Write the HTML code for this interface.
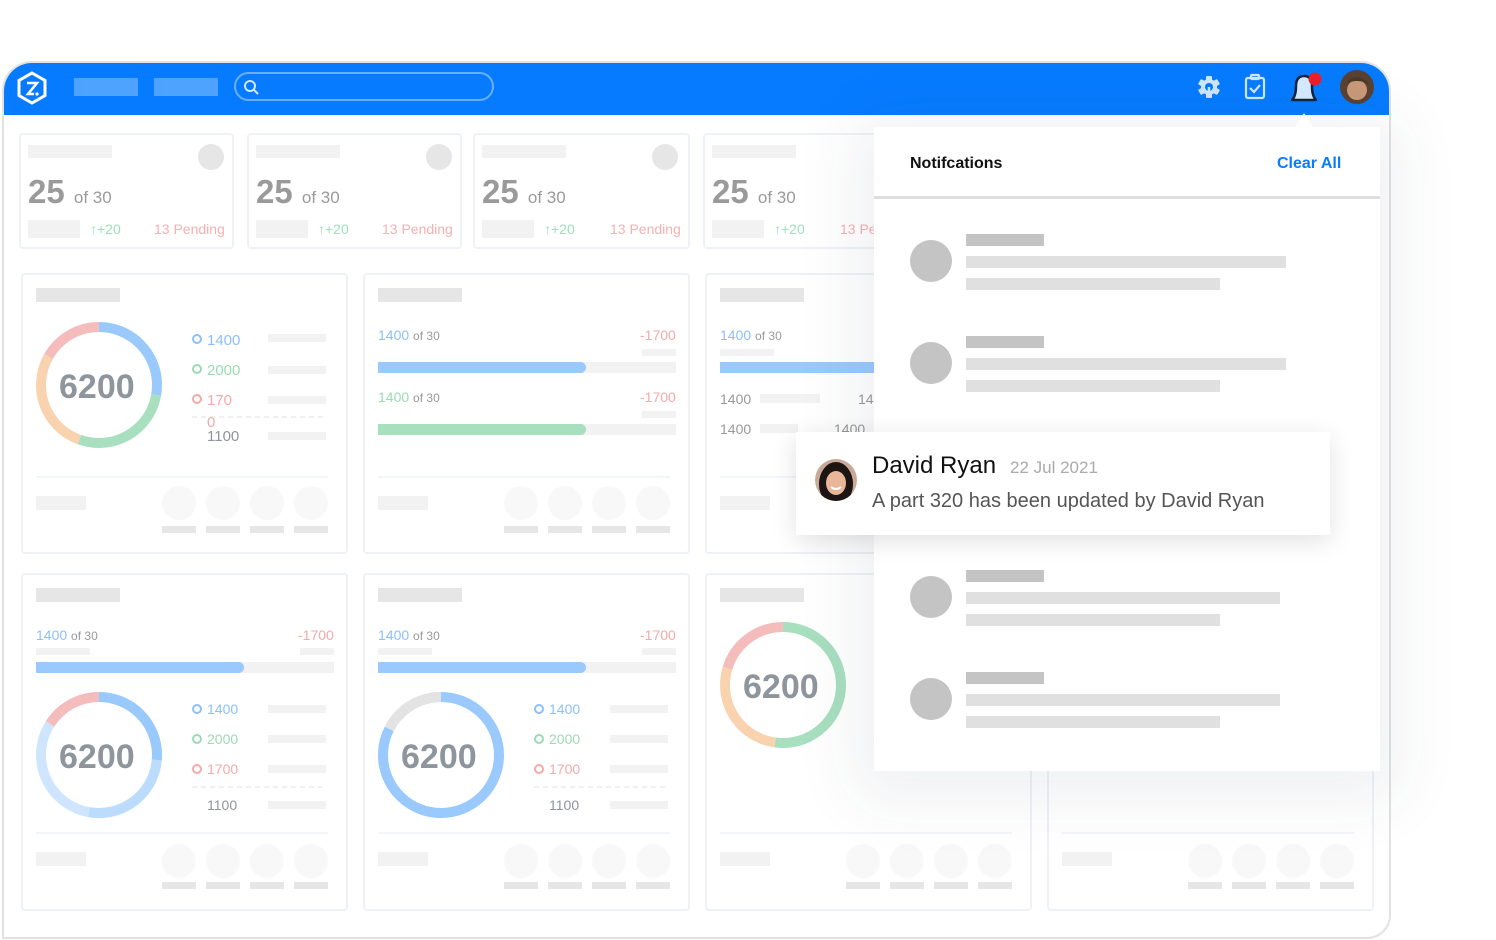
<!DOCTYPE html>
<html><head><meta charset="utf-8"><style>
*{margin:0;padding:0;box-sizing:border-box}
body{width:1496px;height:940px;background:#fff;position:relative;overflow:hidden;font-family:"Liberation Sans",sans-serif}
.a{position:absolute}
.ph{position:absolute;background:#f2f2f2}
.ph2{position:absolute;background:#e6e6e6}
.card{position:absolute;border:2px solid #eef2f7;border-radius:4px;background:#fff}
.t{position:absolute;white-space:nowrap;line-height:1}
</style></head><body>
<div class="a" style="left:2px;top:61px;width:1389px;height:878px;border:2px solid #e2e2e2;border-radius:30px 30px 24px 0;overflow:hidden;background:#fff">
<div class="a" style="left:0;top:0;width:1389px;height:52px;background:#077bff"></div>
</div>
<!-- header -->
<div class="a" style="left:74px;top:78px;width:64px;height:18px;background:#4da3ff"></div>
<div class="a" style="left:154px;top:78px;width:64px;height:18px;background:#4da3ff"></div>
<div class="a" style="left:234px;top:72px;width:260px;height:29px;border:2px solid rgba(255,255,255,.4);border-radius:15px"></div>
<svg class="a" style="left:0;top:0" width="1496" height="940">
<g fill="none" stroke="#fff" stroke-width="3"><path d="M32 73 L45 80.5 L45 95.5 L32 103 L19 95.5 L19 80.5 Z"/></g>
<path d="M27 83 H37 L28 94 H34" fill="none" stroke="#fff" stroke-width="2.5"/><circle cx="37" cy="94" r="1.6" fill="#fff"/>
<circle cx="250" cy="86" r="5" fill="none" stroke="#cfe6ff" stroke-width="2"/><path d="M254 90 L258 94" stroke="#cfe6ff" stroke-width="2"/>
<g fill="#cfe6ff"><circle cx="1209" cy="87" r="8"/>
<rect x="1206" y="76" width="6" height="22" rx="1"/><rect x="1206" y="76" width="6" height="22" rx="1" transform="rotate(60 1209 87)"/><rect x="1206" y="76" width="6" height="22" rx="1" transform="rotate(-60 1209 87)"/></g>
<circle cx="1209" cy="87" r="4" fill="#077bff"/><path d="M1209 87v8" stroke="#cfe6ff" stroke-width="2.5"/>
<g fill="none" stroke="#cfe6ff" stroke-width="2.2"><rect x="1246" y="78" width="18" height="20" rx="2"/><rect x="1251" y="75" width="8" height="4" rx="1"/><path d="M1250 88l4 4 6-7"/></g>
<path d="M1292 100 Q1296 96 1296 86 Q1296 76 1304 76 Q1312 76 1312 86 Q1312 96 1316 100 Z" fill="#d6eaff" stroke="#0a2540" stroke-width="2.5" stroke-linejoin="round"/>
<circle cx="1315" cy="79" r="6.5" fill="#e8202a"/>
<circle cx="1357" cy="87" r="17" fill="#5a4232"/><circle cx="1357" cy="90" r="10" fill="#c99a78"/><path d="M1344 85 Q1357 69 1370 85 Q1357 77 1344 85Z" fill="#4a3a2c"/>
</svg>

<!-- stat cards -->
<div class="card" style="left:19px;top:133px;width:215px;height:116px"></div>
<div class="card" style="left:247px;top:133px;width:215px;height:116px"></div>
<div class="card" style="left:473px;top:133px;width:217px;height:116px"></div>
<div class="card" style="left:703px;top:133px;width:217px;height:116px"></div>
<div class="ph" style="left:28px;top:145px;width:84px;height:13px"></div><div class="a" style="left:198px;top:144px;width:26px;height:26px;border-radius:50%;background:#e6e6e6"></div>
<div class="ph" style="left:256px;top:145px;width:84px;height:13px"></div><div class="a" style="left:426px;top:144px;width:26px;height:26px;border-radius:50%;background:#e6e6e6"></div>
<div class="ph" style="left:482px;top:145px;width:84px;height:13px"></div><div class="a" style="left:652px;top:144px;width:26px;height:26px;border-radius:50%;background:#e6e6e6"></div>
<div class="ph" style="left:712px;top:145px;width:84px;height:13px"></div>
<div class="t" style="left:28px;top:175px;font-size:33px;font-weight:bold;color:#9a9a9a">25 <span style="font-size:17px;font-weight:normal">of 30</span></div>
<div class="t" style="left:256px;top:175px;font-size:33px;font-weight:bold;color:#9a9a9a">25 <span style="font-size:17px;font-weight:normal">of 30</span></div>
<div class="t" style="left:482px;top:175px;font-size:33px;font-weight:bold;color:#9a9a9a">25 <span style="font-size:17px;font-weight:normal">of 30</span></div>
<div class="t" style="left:712px;top:175px;font-size:33px;font-weight:bold;color:#9a9a9a">25 <span style="font-size:17px;font-weight:normal">of 30</span></div>
<div class="ph" style="left:28px;top:220px;width:52px;height:18px"></div><div class="t" style="left:90px;top:222px;font-size:14px;color:#9ee0b9"><b>↑</b>+20</div><div class="t" style="left:154px;top:222px;font-size:14px;color:#f6b0b0">13 Pending</div>
<div class="ph" style="left:256px;top:220px;width:52px;height:18px"></div><div class="t" style="left:318px;top:222px;font-size:14px;color:#9ee0b9"><b>↑</b>+20</div><div class="t" style="left:382px;top:222px;font-size:14px;color:#f6b0b0">13 Pending</div>
<div class="ph" style="left:482px;top:220px;width:52px;height:18px"></div><div class="t" style="left:544px;top:222px;font-size:14px;color:#9ee0b9"><b>↑</b>+20</div><div class="t" style="left:610px;top:222px;font-size:14px;color:#f6b0b0">13 Pending</div>
<div class="ph" style="left:712px;top:220px;width:52px;height:18px"></div><div class="t" style="left:774px;top:222px;font-size:14px;color:#9ee0b9"><b>↑</b>+20</div><div class="t" style="left:840px;top:222px;font-size:14px;color:#f6b0b0">13 Pending</div>

<!-- big cards -->
<div class="card" style="left:21px;top:273px;width:327px;height:281px"></div>
<div class="card" style="left:363px;top:273px;width:327px;height:281px"></div>
<div class="card" style="left:705px;top:273px;width:327px;height:281px"></div>
<div class="card" style="left:21px;top:573px;width:327px;height:338px"></div>
<div class="card" style="left:363px;top:573px;width:327px;height:338px"></div>
<div class="card" style="left:705px;top:573px;width:327px;height:338px"></div>
<div class="card" style="left:1047px;top:573px;width:327px;height:338px"></div>
<div class="ph2" style="left:36px;top:288px;width:84px;height:14px"></div>
<div class="ph2" style="left:378px;top:288px;width:84px;height:14px"></div>
<div class="ph2" style="left:720px;top:288px;width:84px;height:14px"></div>
<div class="ph2" style="left:36px;top:588px;width:84px;height:14px"></div>
<div class="ph2" style="left:378px;top:588px;width:84px;height:14px"></div>
<div class="ph2" style="left:720px;top:588px;width:84px;height:14px"></div>

<!-- donut svg -->
<svg class="a" style="left:0;top:0" width="1496" height="940">
<g fill="none" stroke-width="10">
<g transform="rotate(-90 99 385)"><circle cx="99" cy="385" r="58" stroke="#99c9fd" stroke-dasharray="101 364"/><circle cx="99" cy="385" r="58" stroke="#a8dfbf" stroke-dasharray="101 364" stroke-dashoffset="-101"/><circle cx="99" cy="385" r="58" stroke="#f9d3b0" stroke-dasharray="101 364" stroke-dashoffset="-202"/><circle cx="99" cy="385" r="58" stroke="#f5bcbc" stroke-dasharray="61 364" stroke-dashoffset="-303"/></g>
<g transform="rotate(-90 99 755)"><circle cx="99" cy="755" r="58" stroke="#cfe5fd"/><circle cx="99" cy="755" r="58" stroke="#99c9fd" stroke-dasharray="96 364"/><circle cx="99" cy="755" r="58" stroke="#bcdcfd" stroke-dasharray="96 364" stroke-dashoffset="-96"/><circle cx="99" cy="755" r="58" stroke="#f5bcbc" stroke-dasharray="58 364" stroke-dashoffset="-306"/></g>
<g transform="rotate(-90 441 755)"><circle cx="441" cy="755" r="58" stroke="#99c9fd"/><circle cx="441" cy="755" r="58" stroke="#e3e3e3" stroke-dasharray="64 364" stroke-dashoffset="-300"/></g>
<g transform="rotate(-90 783 685)"><circle cx="783" cy="685" r="58" stroke="#a8dfbf" stroke-dasharray="190 364"/><circle cx="783" cy="685" r="58" stroke="#f9d3b0" stroke-dasharray="100 364" stroke-dashoffset="-190"/><circle cx="783" cy="685" r="58" stroke="#f5bcbc" stroke-dasharray="74 364" stroke-dashoffset="-290"/></g>
</g>
<g fill="none" stroke-width="2">
<circle cx="197" cy="339" r="4" stroke="#8cc0fb"/><circle cx="197" cy="369" r="4" stroke="#9dd9b4"/><circle cx="197" cy="399" r="4" stroke="#f5a9a9"/>
<circle cx="197" cy="709" r="4" stroke="#8cc0fb"/><circle cx="197" cy="739" r="4" stroke="#9dd9b4"/><circle cx="197" cy="769" r="4" stroke="#f5a9a9"/>
<circle cx="539" cy="709" r="4" stroke="#8cc0fb"/><circle cx="539" cy="739" r="4" stroke="#9dd9b4"/><circle cx="539" cy="769" r="4" stroke="#f5a9a9"/>
</g>
<g stroke="#e2e2e2" stroke-width="1" stroke-dasharray="5 4"><path d="M192 417H326M192 787H326M534 787H668"/></g>
</svg>
<div class="t" style="left:59px;top:370px;font-size:34px;font-weight:bold;color:#8e959c">6200</div>
<div class="t" style="left:59px;top:740px;font-size:34px;font-weight:bold;color:#8e959c">6200</div>
<div class="t" style="left:401px;top:740px;font-size:34px;font-weight:bold;color:#8e959c">6200</div>
<div class="t" style="left:743px;top:670px;font-size:34px;font-weight:bold;color:#8e959c">6200</div>

<!-- legends -->
<div class="t" style="left:207px;top:333px;font-size:15px;color:#8cc0fb">1400</div><div class="t" style="left:207px;top:363px;font-size:15px;color:#9dd9b4">2000</div><div class="t" style="left:207px;top:393px;font-size:15px;color:#f5a9a9">170</div><div class="t" style="left:207px;top:415px;font-size:15px;color:#f5a9a9">0</div><div class="t" style="left:207px;top:429px;font-size:15px;color:#8e959c">1100</div>
<div class="ph" style="left:268px;top:334px;width:58px;height:8px"></div><div class="ph" style="left:268px;top:366px;width:58px;height:8px"></div><div class="ph" style="left:268px;top:396px;width:58px;height:8px"></div><div class="ph" style="left:268px;top:432px;width:58px;height:8px"></div>
<div class="t" style="left:207px;top:702px;font-size:14px;color:#8cc0fb">1400</div><div class="t" style="left:207px;top:732px;font-size:14px;color:#9dd9b4">2000</div><div class="t" style="left:207px;top:762px;font-size:14px;color:#f5a9a9">1700</div><div class="t" style="left:207px;top:798px;font-size:14px;color:#8e959c">1100</div>
<div class="ph" style="left:268px;top:705px;width:58px;height:8px"></div><div class="ph" style="left:268px;top:735px;width:58px;height:8px"></div><div class="ph" style="left:268px;top:765px;width:58px;height:8px"></div><div class="ph" style="left:268px;top:801px;width:58px;height:8px"></div>
<div class="t" style="left:549px;top:702px;font-size:14px;color:#8cc0fb">1400</div><div class="t" style="left:549px;top:732px;font-size:14px;color:#9dd9b4">2000</div><div class="t" style="left:549px;top:762px;font-size:14px;color:#f5a9a9">1700</div><div class="t" style="left:549px;top:798px;font-size:14px;color:#8e959c">1100</div>
<div class="ph" style="left:610px;top:705px;width:58px;height:8px"></div><div class="ph" style="left:610px;top:735px;width:58px;height:8px"></div><div class="ph" style="left:610px;top:765px;width:58px;height:8px"></div><div class="ph" style="left:610px;top:801px;width:58px;height:8px"></div>

<!-- progress rows -->
<div class="t" style="left:378px;top:328px;font-size:14px;color:#8cc0fb">1400 <span style="font-size:12px;color:#999">of 30</span></div><div class="t" style="left:640px;top:328px;font-size:14px;color:#f5a9a9">-1700</div>
<div class="ph" style="left:642px;top:349px;width:34px;height:7px"></div>
<div class="ph" style="left:378px;top:362px;width:298px;height:11px"></div><div class="a" style="left:378px;top:362px;width:208px;height:11px;border-radius:0 6px 6px 0;background:#99c9fd"></div>
<div class="t" style="left:378px;top:390px;font-size:14px;color:#9dd9b4">1400 <span style="font-size:12px;color:#999">of 30</span></div><div class="t" style="left:640px;top:390px;font-size:14px;color:#f5a9a9">-1700</div>
<div class="ph" style="left:642px;top:411px;width:34px;height:7px"></div>
<div class="ph" style="left:378px;top:424px;width:298px;height:11px"></div><div class="a" style="left:378px;top:424px;width:208px;height:11px;border-radius:0 6px 6px 0;background:#a8dfbf"></div>

<div class="t" style="left:720px;top:328px;font-size:14px;color:#8cc0fb">1400 <span style="font-size:12px;color:#999">of 30</span></div>
<div class="ph" style="left:720px;top:349px;width:54px;height:7px"></div>
<div class="a" style="left:720px;top:362px;width:160px;height:11px;background:#99c9fd"></div>
<div class="t" style="left:720px;top:392px;font-size:14px;color:#999">1400</div><div class="ph" style="left:760px;top:394px;width:60px;height:9px"></div><div class="t" style="left:858px;top:392px;font-size:14px;color:#999">14</div>
<div class="t" style="left:720px;top:422px;font-size:14px;color:#999">1400</div><div class="ph" style="left:760px;top:424px;width:38px;height:9px"></div><div class="t" style="left:834px;top:422px;font-size:14px;color:#999">1400</div>

<div class="t" style="left:36px;top:628px;font-size:14px;color:#8cc0fb">1400 <span style="font-size:12px;color:#999">of 30</span></div><div class="t" style="left:298px;top:628px;font-size:14px;color:#f5a9a9">-1700</div>
<div class="ph" style="left:36px;top:648px;width:54px;height:7px"></div><div class="ph" style="left:300px;top:648px;width:34px;height:7px"></div>
<div class="ph" style="left:36px;top:662px;width:298px;height:11px"></div><div class="a" style="left:36px;top:662px;width:208px;height:11px;border-radius:0 6px 6px 0;background:#99c9fd"></div>
<div class="t" style="left:378px;top:628px;font-size:14px;color:#8cc0fb">1400 <span style="font-size:12px;color:#999">of 30</span></div><div class="t" style="left:640px;top:628px;font-size:14px;color:#f5a9a9">-1700</div>
<div class="ph" style="left:378px;top:648px;width:54px;height:7px"></div><div class="ph" style="left:642px;top:648px;width:34px;height:7px"></div>
<div class="ph" style="left:378px;top:662px;width:298px;height:11px"></div><div class="a" style="left:378px;top:662px;width:208px;height:11px;border-radius:0 6px 6px 0;background:#99c9fd"></div>

<!-- card footers -->
<svg class="a" style="left:0;top:0" width="1496" height="940">
<g stroke="#eef2f7" stroke-width="1.5"><path d="M36 477H328M378 477H670M720 477H880M36 833H328M378 833H670M720 833H1012M1062 833H1354"/></g>
<g fill="#f2f2f2"><rect x="36" y="496" width="50" height="14"/><rect x="378" y="496" width="50" height="14"/><rect x="720" y="496" width="50" height="14"/><rect x="36" y="852" width="50" height="14"/><rect x="378" y="852" width="50" height="14"/><rect x="720" y="852" width="50" height="14"/><rect x="1062" y="852" width="50" height="14"/></g>
<g fill="#f8f8f8">
<circle cx="179" cy="503" r="17"/><circle cx="223" cy="503" r="17"/><circle cx="267" cy="503" r="17"/><circle cx="311" cy="503" r="17"/>
<circle cx="521" cy="503" r="17"/><circle cx="565" cy="503" r="17"/><circle cx="609" cy="503" r="17"/><circle cx="653" cy="503" r="17"/>
<circle cx="179" cy="861" r="17"/><circle cx="223" cy="861" r="17"/><circle cx="267" cy="861" r="17"/><circle cx="311" cy="861" r="17"/>
<circle cx="521" cy="861" r="17"/><circle cx="565" cy="861" r="17"/><circle cx="609" cy="861" r="17"/><circle cx="653" cy="861" r="17"/>
<circle cx="863" cy="861" r="17"/><circle cx="907" cy="861" r="17"/><circle cx="951" cy="861" r="17"/><circle cx="995" cy="861" r="17"/>
<circle cx="1205" cy="861" r="17"/><circle cx="1249" cy="861" r="17"/><circle cx="1293" cy="861" r="17"/><circle cx="1337" cy="861" r="17"/></g>
<g fill="#e6e6e6">
<rect x="162" y="526" width="34" height="7"/><rect x="206" y="526" width="34" height="7"/><rect x="250" y="526" width="34" height="7"/><rect x="294" y="526" width="34" height="7"/>
<rect x="504" y="526" width="34" height="7"/><rect x="548" y="526" width="34" height="7"/><rect x="592" y="526" width="34" height="7"/><rect x="636" y="526" width="34" height="7"/>
<rect x="162" y="882" width="34" height="7"/><rect x="206" y="882" width="34" height="7"/><rect x="250" y="882" width="34" height="7"/><rect x="294" y="882" width="34" height="7"/>
<rect x="504" y="882" width="34" height="7"/><rect x="548" y="882" width="34" height="7"/><rect x="592" y="882" width="34" height="7"/><rect x="636" y="882" width="34" height="7"/>
<rect x="846" y="882" width="34" height="7"/><rect x="890" y="882" width="34" height="7"/><rect x="934" y="882" width="34" height="7"/><rect x="978" y="882" width="34" height="7"/>
<rect x="1188" y="882" width="34" height="7"/><rect x="1232" y="882" width="34" height="7"/><rect x="1276" y="882" width="34" height="7"/><rect x="1320" y="882" width="34" height="7"/></g>
</svg>

<!-- notification panel -->
<div class="a" style="left:874px;top:127px;width:506px;height:644px;background:#fff;box-shadow:0 10px 60px 20px rgba(40,50,80,.07)"></div>
<svg class="a" style="left:1294px;top:110px" width="22" height="20"><path d="M0 19 L10 3 L20 19 Z" fill="#fff"/></svg>
<div class="t" style="left:910px;top:156px;font-size:16px;font-weight:bold;color:#111">Notifcations</div>
<div class="t" style="left:1277px;top:156px;font-size:16px;font-weight:bold;color:#0a7cff">Clear All</div>
<div class="a" style="left:874px;top:196px;width:506px;height:3px;background:#dedede"></div>
<svg class="a" style="left:0;top:0" width="1496" height="940">
<g fill="#c4c4c4"><circle cx="931" cy="261" r="21"/><circle cx="931" cy="363" r="21"/><circle cx="931" cy="597" r="21"/><circle cx="931" cy="699" r="21"/>
<rect x="966" y="234" width="78" height="12"/><rect x="966" y="336" width="78" height="12"/><rect x="966" y="570" width="78" height="12"/><rect x="966" y="672" width="78" height="12"/></g>
<g fill="#e0e0e0"><rect x="966" y="256" width="320" height="12"/><rect x="966" y="278" width="254" height="12"/>
<rect x="966" y="358" width="320" height="12"/><rect x="966" y="380" width="254" height="12"/>
<rect x="966" y="592" width="314" height="12"/><rect x="966" y="614" width="254" height="12"/>
<rect x="966" y="694" width="314" height="12"/><rect x="966" y="716" width="254" height="12"/></g>
</svg>

<!-- popup -->
<div class="a" style="left:796px;top:432px;width:534px;height:103px;background:#fff;box-shadow:0 6px 24px rgba(0,0,0,.12)"></div>
<svg class="a" style="left:814px;top:458px" width="44" height="44">
<defs><clipPath id="c"><circle cx="22" cy="22" r="21"/></clipPath></defs>
<g clip-path="url(#c)"><rect width="44" height="44" fill="#c7aa98"/><ellipse cx="22" cy="26" rx="17" ry="22" fill="#1d1414"/><ellipse cx="22" cy="25" rx="10" ry="12" fill="#e8b79a"/><path d="M11 18 Q22 6 33 18 L33 14 Q22 2 11 14Z" fill="#1d1414"/><path d="M17 29 Q22 33 27 29" stroke="#fff" stroke-width="2" fill="none"/></g>
</svg>
<div class="t" style="left:872px;top:454px;font-size:24px;color:#111">David Ryan</div>
<div class="t" style="left:1010px;top:459px;font-size:17px;color:#aaa">22 Jul 2021</div>
<div class="t" style="left:872px;top:491px;font-size:20px;color:#555">A part 320 has been updated by David Ryan</div>
</body></html>
